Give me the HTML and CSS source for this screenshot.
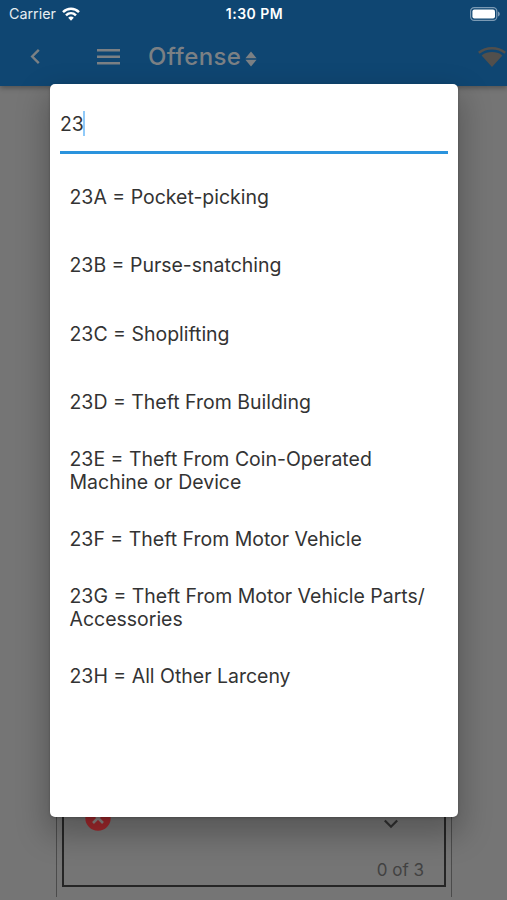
FILE: index.html
```html
<!DOCTYPE html>
<html lang="en">
<head>
  <meta charset="UTF-8">
  <title>Offense</title>
  <link rel="stylesheet" href="styles.css">
</head>
<body>

  <!-- Offense Page -->
  <div class="page">
    <header class="header">
      <div class="status-bar">
        <div class="carrier">
          <span>Carrier</span>
          <svg width="18" height="14" viewBox="0 0 18 14" fill="none" stroke="#fff" stroke-width="2.5">
            <path d="M1 5.2C5.6.7 12.4.7 17 5.2"/>
            <path d="M4 8.4c2.9-2.8 7.1-2.8 10 0"/>
            <path d="M6.2 10.8c1.6-1.6 4-1.6 5.6 0L9 13.7z" fill="#fff" stroke="none"/>
          </svg>
        </div>
        <div class="clock">1:30 PM</div>
        <svg class="battery" width="30" height="14" viewBox="0 0 30 14">
          <rect x=".6" y=".6" width="26.2" height="12.8" rx="3.6" fill="none" stroke="#7b9ab4" stroke-width="1.2"/>
          <rect x="2.4" y="2.4" width="22.6" height="9.2" rx="2" fill="#fff"/>
          <path d="M28 4.6c2.4.9 2.4 3.9 0 4.8z" fill="#7b9ab4"/>
        </svg>
      </div>
      <div class="toolbar">
        <svg class="back" width="10" height="15" viewBox="0 0 10 15" fill="none" stroke="#7b8084" stroke-width="2.4">
          <path d="M8.8.9L2.2 7.5l6.6 6.6"/>
        </svg>
        <svg class="menu" width="23" height="16" viewBox="0 0 23 16" fill="#7b8084">
          <path d="M0 0h23v2.5H0zM0 6.5h23V9H0zM0 13h23v2.5H0z"/>
        </svg>
        <h1>Offense</h1>
        <svg class="sort" width="12" height="16" viewBox="0 0 12 16" fill="#7b8084">
          <path d="M6 .5L11.6 7.3H.4zM6 15.5L.4 8.7h11.2z"/>
        </svg>
        <svg class="signal" width="30" height="22" viewBox="0 0 30 22">
          <path d="M1.8 6.8C9.3.8 20.7.8 28.2 6.8" fill="none" stroke="#514f4c" stroke-width="2.4"/>
          <path d="M4.6 9.4C10.6 5 19.4 5 25.4 9.4L15 21z" fill="#514f4c"/>
        </svg>
      </div>
    </header>

    <main class="content">
      <div class="panel">
        <div class="card">
          <div class="card-row">
            <svg class="error" width="26" height="26" viewBox="0 0 26 26">
              <circle cx="13" cy="13" r="12.7" fill="#a1282c"/>
              <path d="M8 8l10 10M18 8L8 18" stroke="#8a8583" stroke-width="2.6"/>
            </svg>
            <svg class="chevron" width="14" height="10" viewBox="0 0 14 10" fill="none" stroke="#303030" stroke-width="2.2">
              <path d="M.8 1.5L7 7.8l6.2-6.3"/>
            </svg>
          </div>
          <div class="counter">0 of 3</div>
        </div>
      </div>
    </main>
  </div>

  <!-- Search Dialog -->
  <div class="dialog">
    <div class="search"><span>23</span><i class="caret"></i></div>
    <ul class="results">
      <li>23A = Pocket-picking</li>
      <li>23B = Purse-snatching</li>
      <li>23C = Shoplifting</li>
      <li>23D = Theft From Building</li>
      <li>23E = Theft From Coin-Operated Machine or Device</li>
      <li>23F = Theft From Motor Vehicle</li>
      <li>23G = Theft From Motor Vehicle Parts/<wbr>Accessories</li>
      <li>23H = All Other Larceny</li>
    </ul>
  </div>

</body>
</html>
```

FILE: styles.css
```css
* {
  box-sizing: border-box;
}
body {
  font-family: Inter, "Liberation Sans", sans-serif;
  margin: 0;
  background: #757575;
  overflow: hidden;
}
svg {
  display: block;
  flex-shrink: 0;
}
.page {
  display: flex;
  flex-direction: column;
  height: 900px;
}

/* Header */
.header {
  height: 86px;
  background: #0f4672;
  box-shadow: 0 2px 5px rgba(0,0,0,0.3);
}
.status-bar {
  display: grid;
  grid-template-columns: 1fr auto 1fr;
  align-items: center;
  height: 27px;
  padding: 0 7px 0 9px;
  color: #fff;
  font-size: 14.3px;
}
.carrier {
  display: flex;
  align-items: center;
  gap: 6px;
  color: #e7edf1;
}
.clock {
  font-weight: 600;
  font-size: 14px;
  letter-spacing: 0.5px;
}
.battery {
  justify-self: end;
}
.toolbar {
  display: flex;
  align-items: center;
  height: 59px;
  padding-left: 30px;
}
.back {
  margin-top: -1px;
}
.menu {
  margin-left: 57px;
}
.toolbar h1 {
  margin: 0 0 0 28px;
  font-size: 24px;
  font-weight: 500;
  line-height: 30px;
  letter-spacing: 0.4px;
  color: #7b8084;
}
.sort {
  margin: 4px 0 0 4px;
}
.signal {
  margin-left: auto;
}

/* Form behind the dialog */
.content {
  display: flex;
  flex: 1;
  padding: 0 55px 3px 56px;
}
.panel {
  display: flex;
  flex: 1;
  padding: 0 5px 10px;
  border: solid #4b4b4b;
  border-width: 0 1px;
}
.card {
  display: flex;
  flex: 1;
  flex-direction: column;
  justify-content: flex-end;
  border: 2px solid #252525;
  border-top: 0;
  padding: 0 20px 3px 21px;
}
.card-row {
  display: flex;
  justify-content: space-between;
  align-items: center;
}
.chevron {
  margin: 11px 26px 0 0;
}
.counter {
  margin-top: 27px;
  font-size: 17px;
  line-height: 24px;
  text-align: right;
  color: #424242;
}

/* Dialog */
.dialog {
  position: absolute;
  top: 84px;
  left: 50px;
  width: 408px;
  height: 733px;
  padding: 0 10px;
  background: #fff;
  border-radius: 5px;
  box-shadow: 0 14px 30px 4px rgba(0,0,0,0.25), 0 1px 3px rgba(0,0,0,0.2);
}
.search {
  display: flex;
  align-items: center;
  height: 70px;
  padding-top: 12px;
  border-bottom: 3px solid #2a93dd;
  font-size: 19.4px;
  color: #333;
}
.caret {
  width: 2px;
  height: 25px;
  margin-left: -1px;
  background: #90caf9;
}
.results {
  list-style: none;
  margin: 0;
  padding: 9.3px 10px 9px 9.5px;
}
.results li {
  display: flex;
  align-items: center;
  height: 68.4px;
  font-size: 19.48px;
  line-height: 23.2px;
  color: #333;
}
```
